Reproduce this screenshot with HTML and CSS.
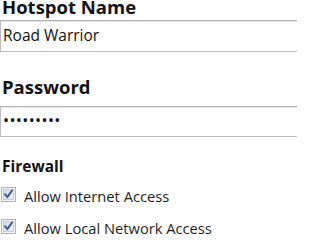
FILE: index.html
```html
<!DOCTYPE html>
<html>
<head>
<meta charset="utf-8">
<link rel="stylesheet" href="styles.css">
</head>
<body>
<form class="form">
  <h2 class="title title-first">Hotspot Name</h2>
  <input class="field" type="text" value="Road Warrior">
  <h2 class="title title-pass">Password</h2>
  <input class="field field-pass" type="password" value="123456789">
  <h3 class="section">Firewall</h3>
  <label class="check check-first">
    <svg class="box" width="15" height="15" viewBox="0 0 15 15">
      <defs>
        <linearGradient id="g" x1="0" y1="0" x2="1" y2="1">
          <stop offset="0" stop-color="#d4d9e2"/>
          <stop offset="1" stop-color="#f4f6f9"/>
        </linearGradient>
      </defs>
      <rect x="0.5" y="0.5" width="14" height="14" fill="#f2f2f2" stroke="#b4b4b4"/>
      <rect x="2.5" y="2.5" width="10" height="10" fill="url(#g)" stroke="#c9ced6"/>
      <path d="M4 7.2 L6.3 10.2 L11 3.6" fill="none" stroke="#3a5c9c" stroke-width="2" stroke-linecap="round" stroke-linejoin="round"/>
    </svg>
    <span class="label">Allow Internet Access</span>
  </label>
  <label class="check">
    <svg class="box" width="15" height="15" viewBox="0 0 15 15">
      <rect x="0.5" y="0.5" width="14" height="14" fill="#f2f2f2" stroke="#b4b4b4"/>
      <rect x="2.5" y="2.5" width="10" height="10" fill="url(#g)" stroke="#c9ced6"/>
      <path d="M4 7.2 L6.3 10.2 L11 3.6" fill="none" stroke="#3a5c9c" stroke-width="2" stroke-linecap="round" stroke-linejoin="round"/>
    </svg>
    <span class="label">Allow Local Network Access</span>
  </label>
</form>
</body>
</html>
```

FILE: styles.css
```css
html, body {
  margin: 0;
  padding: 0;
  background: #ffffff;
  overflow: hidden;
}

body {
  width: 297px;
  height: 236px;
  font-family: "Open Sans", "Liberation Sans", sans-serif;
  color: #111111;
}

.form {
  display: flex;
  flex-direction: column;
  margin: 0;
}

.title {
  margin: 0;
  padding-left: 2px;
  font-size: 18.5px;
  line-height: 20px;
  font-weight: 700;
  color: #121212;
}

.title-first {
  margin-top: -3px;
  margin-bottom: 3px;
}

.title-pass {
  margin-top: 25px;
  margin-bottom: 9px;
}

.field {
  box-sizing: border-box;
  width: 320px;
  height: 32px;
  margin: 0;
  padding: 0 3px 3px 2px;
  border: 1px solid #bcbcbc;
  border-top-color: #b4b4b4;
  box-shadow: inset 0 1px 0 #e2e2e2;
  border-radius: 0;
  background: #ffffff;
  font-family: "Open Sans", "Liberation Sans", sans-serif;
  font-size: 15.5px;
  color: #111111;
  outline: none;
}

.field-pass {
  height: 31px;
  font-size: 16px;
  letter-spacing: 0.4px;
}

.section {
  margin: 20px 0 0 0;
  padding-left: 2px;
  font-size: 15.5px;
  line-height: 18px;
  font-weight: 700;
  color: #121212;
}

.check {
  display: flex;
  align-items: center;
  gap: 8px;
  margin-top: 17px;
  padding-left: 1px;
  height: 15px;
}

.check-first {
  margin-top: 12px;
}

.box {
  display: block;
  flex: none;
}

.label {
  padding-top: 3px;
  font-size: 14.7px;
  line-height: 16px;
  color: #1e1e1e;
}
```
